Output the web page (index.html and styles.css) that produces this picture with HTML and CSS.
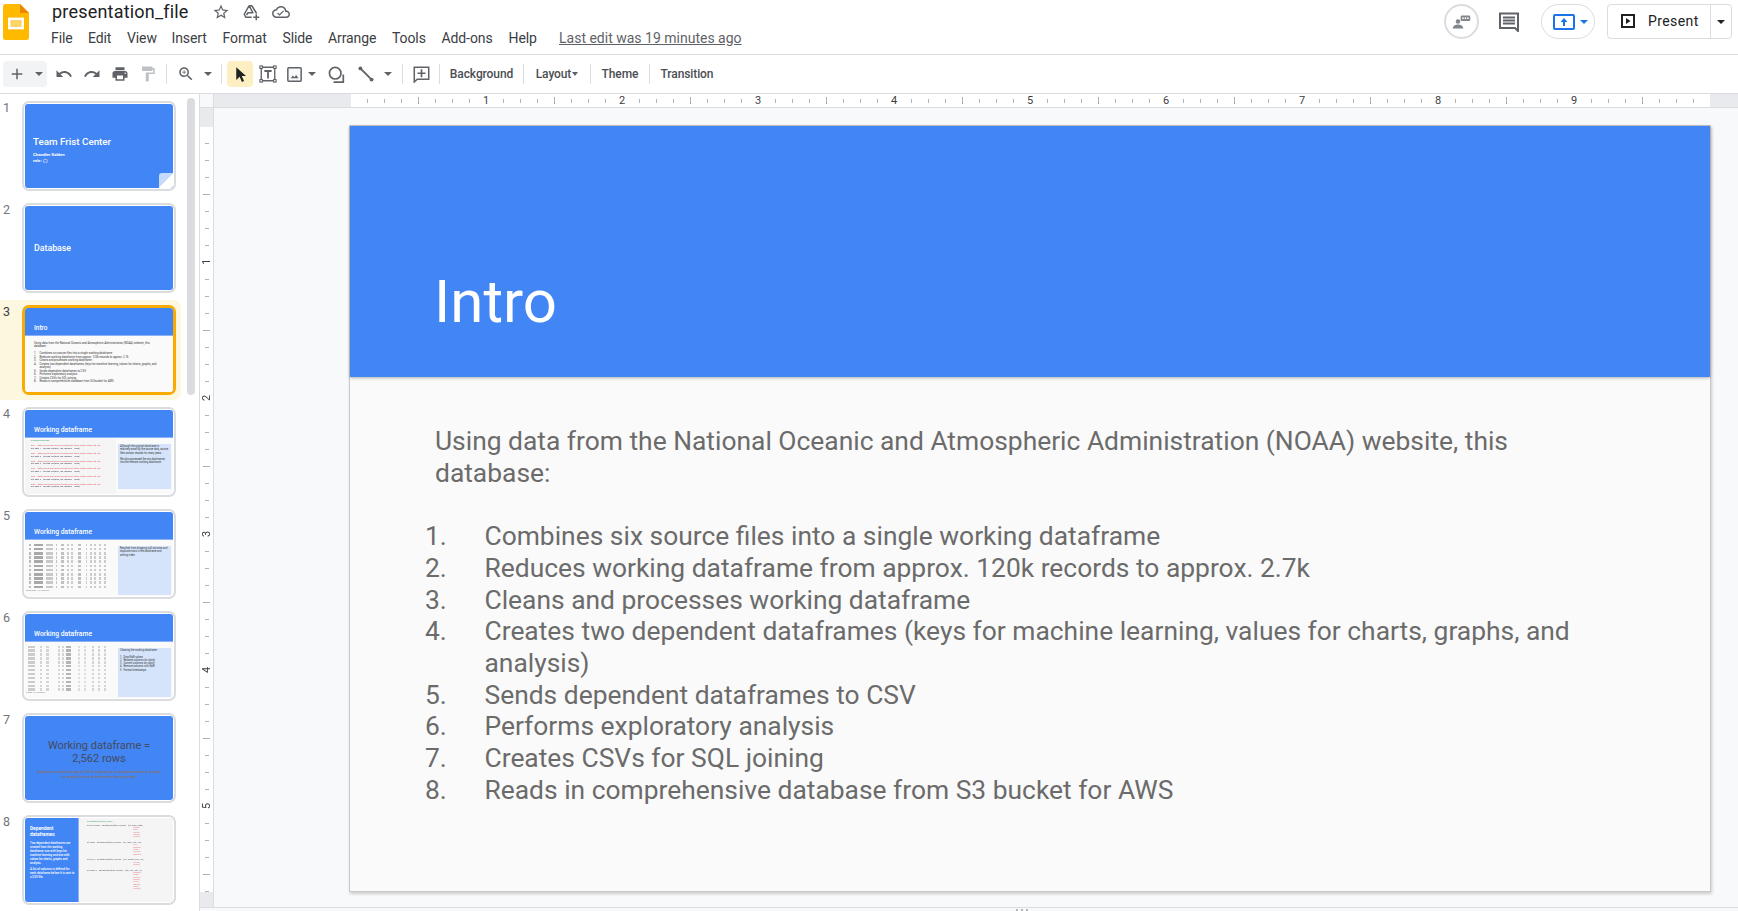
FILE: index.html
```html
<!DOCTYPE html>
<html lang="en">
<head>
<meta charset="utf-8">
<title>presentation_file - Google Slides</title>
<link rel="stylesheet" href="styles.css">
</head>
<body>
<header class="appbar">
  <svg class="logo" viewBox="0 0 26 36"><path fill="#ffba00" d="M2.500 0H17l9 9v24.500a2.500 2.500 0 0 1-2.500 2.500h-21A2.500 2.500 0 0 1 0 33.500V2.500A2.500 2.500 0 0 1 2.500 0z"/><path fill="#ea8600" d="M17 0l9 9h-9z"/><rect x="6.200" y="14.800" width="13.600" height="9.400" fill="#ffd466" stroke="#fff" stroke-width="2.400"/></svg>
  <div class="docinfo">
    <div class="titlerow">
      <span class="doctitle">presentation_file</span>
      <svg class="ico18 star" viewBox="0 0 24 24"><path fill="#5f6368" d="M22 9.240l-7.190-.62L12 2 9.190 8.630 2 9.240l5.460 4.730L5.820 21 12 17.270 18.180 21l-1.630-7.030L22 9.240zM12 15.400l-3.760 2.270 1-4.280-3.320-2.880 4.380-.38L12 6.100l1.710 4.040 4.380.38-3.320 2.880 1 4.280L12 15.400z"/></svg>
      <svg class="ico18 drive" viewBox="0 0 24 24"><path fill="none" stroke="#5f6368" stroke-width="2" stroke-linejoin="round" d="M9.500 3.500h3.500l6.500 10.500M9.500 3.500L3 15l2 4h8M9.500 3.500l5 9.500H8l-2 3"/><path fill="#5f6368" d="M18 15h2v3h3v2h-3v3h-2v-3h-3v-2h3z"/></svg>
      <svg class="ico18 cloud" viewBox="0 0 24 24"><path fill="#5f6368" d="M19.350 10.040C18.670 6.590 15.640 4 12 4 9.110 4 6.600 5.640 5.350 8.040 2.340 8.360 0 10.910 0 14c0 3.310 2.690 6 6 6h13c2.760 0 5-2.240 5-5 0-2.640-2.050-4.780-4.650-4.960zM19 18H6c-2.210 0-4-1.790-4-4s1.790-4 4-4h.71C7.370 7.690 9.480 6 12 6c3.040 0 5.500 2.460 5.500 5.500v.5H19c1.660 0 3 1.340 3 3s-1.340 3-3 3z"/><path fill="#5f6368" d="M10 14.800l-2.100-2.100-1.100 1.100 3.200 3.200 6-6-1.100-1.100z"/></svg>
    </div>
    <nav class="menubar">
      <span class="menu m-file">File</span><span class="menu m-edit">Edit</span><span class="menu m-view">View</span><span class="menu m-insert">Insert</span><span class="menu m-format">Format</span><span class="menu m-slide">Slide</span><span class="menu m-arrange">Arrange</span><span class="menu m-tools">Tools</span><span class="menu m-addons">Add-ons</span><span class="menu m-help">Help</span>
      <a class="lastedit">Last edit was 19 minutes ago</a>
    </nav>
  </div>
  <div class="appright">
    <div class="activity"><svg viewBox="0 0 24 24" class="ico24"><circle cx="8" cy="12" r="2.600" fill="#80868b"/><path fill="#80868b" d="M2 20c0-3 3.200-4.500 6-4.500s6 1.500 6 4.500z"/><rect x="11" y="5" width="11" height="6.500" rx="1.500" fill="#80868b"/><g fill="#fff"><circle cx="13.700" cy="8.200" r="1"/><circle cx="16.500" cy="8.200" r="1"/><circle cx="19.300" cy="8.200" r="1"/></g></svg></div>
    <svg class="comments" viewBox="0 0 20 20"><path fill="none" stroke="#5f6368" stroke-width="2" d="M1 1.500h18V19l-3-3H1z"/><path stroke="#5f6368" stroke-width="1.800" d="M4 5.500h12M4 8.500h12M4 11.500h12"/></svg>
    <div class="sharepill"><svg class="share-ico" viewBox="0 0 22 16"><rect x="1" y="1" width="20" height="14" rx="1" fill="none" stroke="#1a73e8" stroke-width="2"/><path fill="#1a73e8" d="M11 4l3.500 4H12v4h-2V8H7.500z"/></svg><span class="caret blue"></span></div>
    <div class="present">
      <div class="present-main"><svg class="present-ico" viewBox="0 0 14 14"><rect x="1" y="1" width="12" height="12" fill="none" stroke="#202124" stroke-width="2"/><path fill="#202124" d="M5 4l4.500 3L5 10z"/></svg><span>Present</span></div>
      <div class="present-drop"><span class="caret dark"></span></div>
    </div>
  </div>
</header>
<div class="toolbar">
  <div class="newgroup"><svg class="ico18" viewBox="0 0 24 24"><path fill="#5f6368" d="M19 13h-6v6h-2v-6H5v-2h6V5h2v6h6z"/></svg><span class="caret"></span></div>
  <button class="tb tb-first"><svg class="ico18" viewBox="0 0 24 24"><path fill="#5f6368" d="M12.500 8c-2.650 0-5.050.99-6.900 2.600L2 7v9h9l-3.620-3.620c1.390-1.160 3.160-1.880 5.120-1.880 3.540 0 6.550 2.310 7.600 5.500l2.370-.78C21.080 11.030 17.150 8 12.500 8z"/></svg></button>
  <button class="tb"><svg class="ico18" viewBox="0 0 24 24"><path fill="#5f6368" d="M18.400 10.600C16.550 8.990 14.150 8 11.500 8c-4.650 0-8.580 3.030-9.960 7.220L3.900 16c1.050-3.190 4.050-5.500 7.600-5.500 1.950 0 3.730.72 5.120 1.880L13 16h9V7l-3.600 3.600z"/></svg></button>
  <button class="tb"><svg class="ico18" viewBox="0 0 24 24"><path fill="#5f6368" d="M19 8H5c-1.660 0-3 1.340-3 3v6h4v4h12v-4h4v-6c0-1.660-1.340-3-3-3zm-3 11H8v-5h8v5zm3-7c-.55 0-1-.45-1-1s.45-1 1-1 1 .45 1 1-.45 1-1 1zm-1-9H6v4h12V3z"/></svg></button>
  <button class="tb"><svg class="ico18" viewBox="0 0 24 24"><path fill="#bdc1c6" d="M18 4V3c0-.55-.45-1-1-1H5c-.55 0-1 .45-1 1v4c0 .55.45 1 1 1h12c.55 0 1-.45 1-1V6h1v4H9v11c0 .55.45 1 1 1h2c.55 0 1-.45 1-1v-9h8V4h-3z"/></svg></button>
  <i class="sep s-a"></i>
  <button class="tb"><svg class="ico18" viewBox="0 0 24 24"><path fill="#5f6368" d="M15.500 14h-.79l-.28-.27C15.410 12.590 16 11.110 16 9.500 16 5.910 13.090 3 9.500 3S3 5.910 3 9.500 5.910 16 9.500 16c1.610 0 3.090-.59 4.230-1.570l.27.28v.79l5 4.990L20.490 19l-4.990-5zm-6 0C7.010 14 5 11.990 5 9.500S7.010 5 9.500 5 14 7.010 14 9.500 11.990 14 9.500 14z"/><path fill="#5f6368" d="M12 10h-2v2H9v-2H7V9h2V7h1v2h2z"/></svg></button>
  <button class="tb-caret"><span class="caret"></span></button>
  <i class="sep s-b"></i>
  <button class="tb tb-active"><svg class="ico18" viewBox="0 0 24 24"><path fill="#202124" d="M7 3v17l4.500-4.300 3.100 6.800 2.800-1.300-3.100-6.600H20z"/></svg></button>
  <button class="tb tb-text"><svg class="ico20" viewBox="0 0 20 20"><path fill="none" stroke="#5f6368" stroke-width="1.500" d="M2.500 2.500h15v15h-15z"/><g fill="#fff" stroke="#5f6368" stroke-width="1.200"><rect x="1" y="1" width="2.800" height="2.800"/><rect x="16.200" y="1" width="2.800" height="2.800"/><rect x="1" y="16.200" width="2.800" height="2.800"/><rect x="16.200" y="16.200" width="2.800" height="2.800"/></g><path fill="#5f6368" d="M6 5.500h8v2.200h-3v7.300H9V7.700H6z"/></svg></button>
  <button class="tb tb-img"><svg class="ico18" viewBox="0 0 18 18"><rect x="1" y="1" width="16" height="16" rx="1" fill="#f8f9fa" stroke="#5f6368" stroke-width="1.800"/><path fill="#5f6368" d="M4.500 13.500l2.500-3.200 1.800 2.100L11 9.500l2.800 4z"/></svg></button>
  <button class="tb-caret narrow"><span class="caret"></span></button>
  <button class="tb tb-shape"><svg class="ico20" viewBox="0 0 20 20"><circle cx="8.500" cy="8.500" r="6.800" fill="none" stroke="#5f6368" stroke-width="2"/><path fill="none" stroke="#5f6368" stroke-width="2" d="M18 10v9H6.500"/></svg></button>
  <button class="tb tb-line"><svg class="ico20" viewBox="0 0 20 20"><path stroke="#5f6368" stroke-width="2.400" d="M3 3l14 14"/><circle cx="3" cy="3" r="2.400" fill="#5f6368"/><circle cx="17" cy="17" r="2.400" fill="#5f6368"/></svg></button>
  <button class="tb-caret"><span class="caret"></span></button>
  <i class="sep s-c"></i>
  <button class="tb tb-cmt"><svg class="ico20" viewBox="0 0 20 20"><path fill="none" stroke="#5f6368" stroke-width="1.800" d="M1.500 1.500h17v14H5l-3.500 3.300z"/><path fill="#5f6368" d="M9 3.800h2V7.500h3.700v2H11v3.700H9V9.500H5.300v-2H9z"/></svg></button>
  <i class="sep s-d"></i>
  <button class="tb-label l-bg">Background</button>
  <i class="sep s-e"></i>
  <button class="tb-label l-layout">Layout<span class="caret small"></span></button>
  <i class="sep s-f"></i>
  <button class="tb-label l-theme">Theme</button>
  <i class="sep s-g"></i>
  <button class="tb-label l-trans">Transition</button>
</div>
<div class="workspace">
  <aside class="filmstrip">
    <div class="strip-list">
      <div class="row"><span class="num">1</span>
        <div class="thumb"><div class="t-in t-title">
          <p class="t1-head">Team Frist Center</p><p class="t1-sub">Chandler Kalden</p><p class="t1-sub">role: ◯</p><i class="curl"></i>
        </div></div></div>
      <div class="row"><span class="num">2</span>
        <div class="thumb"><div class="t-in t-title"><p class="t2-head">Database</p></div></div></div>
      <div class="row row-active"><span class="num">3</span>
        <div class="thumb thumb-active"><div class="t-in t-light">
          <div class="t-band"><p class="t-h">Intro</p></div>
          <div class="t3-body">
            <p>Using data from the National Oceanic and Atmospheric Administration (NOAA) website, this database:</p>
            <ol class="t3-list"><li>Combines six source files into a single working dataframe</li><li>Reduces working dataframe from approx. 120k records to approx. 2.7k</li><li>Cleans and processes working dataframe</li><li>Creates two dependent dataframes (keys for machine learning, values for charts, graphs, and analysis)</li><li>Sends dependent dataframes to CSV</li><li>Performs exploratory analysis</li><li>Creates CSVs for SQL joining</li><li>Reads in comprehensive database from S3 bucket for AWS</li></ol>
          </div>
        </div></div></div>
      <div class="row"><span class="num">4</span>
        <div class="thumb"><div class="t-in t-light">
          <div class="t-band"><p class="t-h wide">Working dataframe</p></div>
          <div class="t-split">
            <div class="codebox"><p class="c-green">## Read in raw data</p>
              <p>file1 = "https://www.ncei.noaa.gov/data/noaa-storm-events-details-ftp-csv"</p><p>file_data_1 = pd.read_csv(file1, low_memory = False)</p>
              <p>file2 = "https://www.ncei.noaa.gov/data/noaa-storm-events-details-ftp-csv"</p><p>file_data_2 = pd.read_csv(file2, low_memory = False)</p>
              <p>file3 = "https://www.ncei.noaa.gov/data/noaa-storm-events-details-ftp-csv"</p><p>file_data_3 = pd.read_csv(file3, low_memory = False)</p>
              <p>file4 = "https://www.ncei.noaa.gov/data/noaa-storm-events-details-ftp-csv"</p><p>file_data_4 = pd.read_csv(file4, low_memory = False)</p>
              <p>file5 = "https://www.ncei.noaa.gov/data/noaa-storm-events-details-ftp-csv"</p><p>file_data_5 = pd.read_csv(file5, low_memory = False)</p>
              <p>file6 = "https://www.ncei.noaa.gov/data/noaa-storm-events-details-ftp-csv"</p><p>file_data_6 = pd.read_csv(file6, low_memory = False)</p>
            </div>
            <div class="notebox"><p>Although the original dataframe is relatively small by the source data, source files contain records for many years.</p><br><p>We also processed the raw dataframes into the relevant working dataframe.</p></div>
          </div>
        </div></div></div>
      <div class="row"><span class="num">5</span>
        <div class="thumb"><div class="t-in t-light">
          <div class="t-band"><p class="t-h wide">Working dataframe</p></div>
          <div class="t-split">
            <div class="tablebox"><div class="rows"></div><p class="tablecap">2,562 rows × 51 columns</p></div>
            <div class="notebox boxtall"><p>Resulted from dropping null columns and duplicate rows in the dataframe and setting index.</p></div>
          </div>
        </div></div></div>
      <div class="row"><span class="num">6</span>
        <div class="thumb"><div class="t-in t-light">
          <div class="t-band"><p class="t-h wide">Working dataframe</p></div>
          <div class="t-split">
            <div class="tablebox"><div class="rows rows-b"></div><p class="tablecap">5 rows × 51 columns</p></div>
            <div class="notebox boxtall"><p>Cleaning the working dataframe:</p><br><p>1. &nbsp;Drop NaN values</p><p>2. &nbsp;Rename columns for clarity</p><p>3. &nbsp;Convert columns for clarity</p><p>4. &nbsp;Remove columns with NaN</p><p>5. &nbsp;Format timestamps</p></div>
          </div>
        </div></div></div>
      <div class="row"><span class="num">7</span>
        <div class="thumb"><div class="t-in t-title t7">
          <p class="t7-big">Working dataframe =<br>2,562 rows</p>
          <p class="t7-small">Dataframe is reduced to approx 20% its original size, an adequate number of records for analysis but not as the machine learning model</p>
        </div></div></div>
      <div class="row"><span class="num">8</span>
        <div class="thumb"><div class="t-in t8">
          <div class="t8-left"><p class="t8-head">Dependent dataframes</p><p class="t8-txt">Two dependent dataframes are created from the working dataframe: one with keys for machine learning and one with values for charts, graphs and analysis.</p><p class="t8-txt">A list of columns is defined for each dataframe before it is sent to a CSV file.</p></div>
          <div class="t8-right">
            <p class="c-green">## Dataframes of keys, values</p>
            <p>df_keys_simple = pd.DataFrame(files, columns = ["id", "type", "state",</p><p class="c-red ind">"month",</p><p class="c-red ind">"year",</p><p class="c-red ind">"county",</p><p class="c-red ind">"source",</p><p class="c-red ind">"begin"])</p><p class="gap"></p>
            <p>df_values = pd.DataFrame(files, columns = ["id", "type", "city", "lat",</p><p class="c-red ind">"lon",</p><p class="c-red ind">"damage",</p><p class="c-red ind">"crops",</p><p class="c-red ind">"injuries",</p><p class="c-red ind">"deaths"])</p><p class="gap"></p>
            <p>df_keys_b = pd.DataFrame(files, columns = ["id", "month", "end", "src",</p><p class="c-red ind">"source",</p><p class="c-red ind">"begin"])</p><p class="gap"></p>
            <p>df_values_b = pd.DataFrame(files, columns = ["lat", "lon", "city", "id",</p><p class="c-red ind">"damage",</p><p class="c-red ind">"crops",</p><p class="c-red ind">"injuries",</p><p class="c-red ind">"deaths",</p><p class="c-red ind">"direct",</p><p class="c-red ind">"indirect",</p><p class="c-red ind">"state",</p><p class="c-red ind">"county"])</p>
          </div>
        </div></div></div>
    </div>
    <div class="scrolltrack"><div class="scrollthumb"></div></div>
  </aside>
  <main class="editor">
    <div class="ruler-top">
      <div class="corner"></div>
      <div class="grey-lead"></div>
      <div class="h-track">
        <span class="inch"><b>1</b></span><span class="inch"><b>2</b></span><span class="inch"><b>3</b></span><span class="inch"><b>4</b></span><span class="inch"><b>5</b></span><span class="inch"><b>6</b></span><span class="inch"><b>7</b></span><span class="inch"><b>8</b></span><span class="inch"><b>9</b></span>
      </div>
      <div class="grey-tail"></div>
    </div>
    <div class="canvas-row">
      <div class="ruler-left">
        <div class="grey-top"></div>
        <div class="v-track">
          <span class="vinch"><b>1</b></span><span class="vinch"><b>2</b></span><span class="vinch"><b>3</b></span><span class="vinch"><b>4</b></span><span class="vinch"><b>5</b></span>
        </div>
        <div class="grey-bot"></div>
      </div>
      <div class="canvas">
        <section class="slide">
          <div class="slide-head"><h1>Intro</h1></div>
          <div class="slide-body">
            <p class="lead">Using data from the National Oceanic and Atmospheric Administration (NOAA) website, this database:</p>
            <ol class="points">
              <li>Combines six source files into a single working dataframe</li>
              <li>Reduces working dataframe from approx. 120k records to approx. 2.7k</li>
              <li>Cleans and processes working dataframe</li>
              <li>Creates two dependent dataframes (keys for machine learning, values for charts, graphs, and analysis)</li>
              <li>Sends dependent dataframes to CSV</li>
              <li>Performs exploratory analysis</li>
              <li>Creates CSVs for SQL joining</li>
              <li>Reads in comprehensive database from S3 bucket for AWS</li>
            </ol>
          </div>
        </section>
      </div>
    </div>
    <div class="notes-handle"><i></i><i></i><i></i></div>
  </main>
</div>
</body>
</html>
```
FILE: styles.css
```css
* { box-sizing: border-box; }
html, body { margin: 0; height: 100%; }
body { width: 1738px; height: 911px; overflow: hidden; background: #fff; font-family: Roboto, "Liberation Sans", sans-serif; color: #3c4043; }
p, h1, ol { margin: 0; padding: 0; }
button { border: 0; background: none; padding: 0; margin: 0; font: inherit; color: inherit; display: flex; align-items: center; justify-content: center; }
svg { display: block; flex: none; }

/* app bar */
.appbar { height: 55px; border-bottom: 1px solid #dadce0; display: flex; position: relative; }
.logo { width: 26px; height: 36px; margin: 4px 0 0 3px; }
.docinfo { margin-left: 23px; }
.titlerow { display: flex; align-items: center; height: 24px; }
.doctitle { font-size: 18px; letter-spacing: .2px; color: #202124; width: 160px; line-height: 24px; }
.ico18 { width: 18px; height: 18px; }
.ico20 { width: 20px; height: 20px; }
.ico24 { width: 24px; height: 24px; }
.drive { margin-left: 12px; }
.cloud { margin-left: 12px; }
.menubar { display: flex; height: 26px; align-items: center; font-size: 14px; color: #3c4043; margin: 1px 0 0 -1px; }
.menu { display: block; letter-spacing: -.1px; }
.m-file { width: 37px; } .m-edit { width: 39px; } .m-view { width: 44.500px; } .m-insert { width: 51px; } .m-format { width: 60px; } .m-slide { width: 45.500px; } .m-arrange { width: 64px; } .m-tools { width: 49.500px; } .m-addons { width: 67px; } .m-help { width: 50.500px; }
.lastedit { color: #5f6368; text-decoration: underline; font-size: 14px; }
.appright { margin-left: auto; display: flex; align-items: flex-start; padding-top: 4px; padding-right: 6px; }
.activity { width: 35px; height: 35px; border: 2px solid #dadce0; border-radius: 50%; display: flex; align-items: center; justify-content: center; }
.activity .ico24 { width: 21px; height: 21px; }
.comments { width: 20px; height: 20px; margin: 8px 0 0 20px; }
.sharepill { width: 54px; height: 35px; margin-left: 22px; border: 1px solid #dadce0; border-radius: 18px; display: flex; align-items: center; padding-left: 11px; gap: 5px; }
.share-ico { width: 22px; height: 16px; }
.present { margin-left: 12px; width: 125px; height: 35px; border: 1px solid #dadce0; border-radius: 4px; display: flex; }
.present-main { width: 103px; border-right: 1px solid #dadce0; display: flex; align-items: center; padding: 0 0 1px 13px; gap: 13px; font-size: 14px; color: #202124; letter-spacing: .4px; }
.present-ico { width: 14px; height: 14px; }
.present-drop { flex: 1; display: flex; align-items: center; justify-content: center; }
.caret { display: block; width: 0; height: 0; border-left: 4px solid transparent; border-right: 4px solid transparent; border-top: 4px solid #5f6368; }
.caret.blue { border-top-color: #1a73e8; }
.caret.dark { border-top-color: #202124; }
.caret.small { display: inline-block; border-left-width: 3.500px; border-right-width: 3.500px; margin-left: 1px; vertical-align: 2px; }

/* toolbar */
.toolbar { height: 38px; display: flex; align-items: center; padding-left: 3px; }
.newgroup { width: 44px; height: 26px; background: #f1f3f4; border-radius: 4px; display: flex; align-items: center; padding-left: 5px; gap: 9px; }
.tb { width: 28px; height: 26px; }
.tb-first { margin-left: 3px; }
.tb-caret { width: 16px; height: 26px; }
.tb-caret.narrow { width: 12px; }
.tb-active { background: #feefc3; border-radius: 4px; width: 26px; }
.tb-text { margin-left: 1px; }
.tb-text svg { width: 18px; height: 18px; }
.tb-img { width: 24px; }
.tb-img svg { width: 15px; height: 15px; }
.tb-shape { margin-left: 4px; }
.tb-shape svg { width: 17px; height: 17px; }
.tb-line { margin-left: 2px; }
.tb-line svg { width: 16px; height: 16px; }
.tb-cmt svg { width: 17px; height: 17px; }
.sep { display: block; width: 1px; height: 20px; background: #dadce0; }
.s-a { margin: 0 5px 0 4px; }
.s-b { margin: 0 5px; }
.s-c { margin: 0 4px 0 6px; }
.s-d, .s-e, .s-f, .s-g { margin: 0 4px; }
.tb-label { font-size: 12px; font-weight: 500; letter-spacing: -.1px; color: #4a4e52; height: 26px; white-space: nowrap; }
.l-bg { width: 75px; }
.l-layout { width: 58px; }
.l-theme { width: 50px; }
.l-trans { width: 66px; }

/* workspace */
.workspace { height: 818px; border-top: 1px solid #dadce0; display: flex; overflow: hidden; }
.filmstrip { width: 200px; border-right: 1px solid #dadce0; display: flex; position: relative; flex: none; }
.strip-list { width: 181px; padding-top: 2px; display: flex; flex-direction: column; gap: 2px; }
.row { height: 100px; flex: none; display: flex; padding: 5px 0 0 3px; border-radius: 0 8px 8px 0; }
.row-active { background: #fef7e0; }
.num { width: 19px; font-size: 12.500px; color: #70757a; line-height: 14px; }
.row-active .num { color: #3c4043; }
.thumb { width: 154px; height: 90px; border: 2px solid #dadce0; border-radius: 7px; padding: 1px; background: #fff; }
.thumb-active { border: 3px solid #f9ab00; padding: 0; }
.t-in { width: 100%; height: 100%; border-radius: 3px; overflow: hidden; position: relative; }
.t-title { background: #4285f4; color: #fff; }
.t1-head { font-size: 9.800px; font-weight: 500; padding: 31.500px 0 5px 8px; line-height: 11px; }
.t1-sub { font-size: 4.300px; font-weight: 700; padding-left: 8px; line-height: 6.300px; }
.curl { position: absolute; right: 0; bottom: 0; width: 14px; height: 15px; background: linear-gradient(135deg, #c6dafc 0 50%, #fff 50%); border-top-left-radius: 3px; }
.t2-head { font-size: 8.800px; font-weight: 500; padding: 37px 0 0 9px; line-height: 11px; }
.t-light { background: #fafafa; color: #595959; }
.t-band { height: 27.500px; background: #4285f4; border-bottom: 1px solid #8ab0f5; color: #fff; padding: 15.500px 0 0 9px; }
.t-h { font-size: 6.500px; line-height: 8px; font-weight: 500; }
.t-h.wide { font-size: 6.800px; }
.t3-body { padding: 6px 13px 0 9px; font-size: 2.850px; line-height: 3.500px; color: #333; }
.t3-list { margin-top: 3.500px; list-style: none; counter-reset: t; padding-left: 5.500px; }
.t3-list li { counter-increment: t; position: relative; }
.t3-list li::before { content: counter(t) "."; position: absolute; left: -5.500px; }
.t-split { display: flex; height: 57px; }
.codebox { width: 91px; margin-top: 1px; padding: 1px 0 0 6px; background: #f5f5f5; font-size: 2.100px; line-height: 2.700px; font-weight: 500; white-space: nowrap; overflow: hidden; color: #666; filter: blur(.2px); }
.codebox p:nth-child(2n) { color: #e06c75; }
.codebox p:nth-child(2n+1) { color: #556; margin-bottom: 2.300px; }
.codebox p.c-green { color: #3fa768; margin-bottom: 3px; }
.c-green { color: #3fa768; }
.c-red { color: #e0787c; }
.notebox { width: 53px; height: 45px; margin: 6px 0 0 2px; background: #d5e4fb; padding: 1.500px 2px; font-size: 2.600px; line-height: 3.300px; color: #333; }
.boxtall { height: 49px; margin-top: 6px; }
.tablebox { width: 91px; padding: 2px 0 0 1px; }
.rows { height: 47px; filter: blur(.3px); background:
  repeating-linear-gradient(#fafafa 0 1.600px, transparent 1.600px 4.200px),
  linear-gradient(90deg, #fafafa 0 3px, #bbb 3px 5px, #fafafa 5px 8px, #a8a8a8 8px 17px, #fafafa 17px 20px, #c8c8c8 20px 27px, #fafafa 27px 30px, #c4c4c4 30px 31.500px, #fafafa 31.500px 35px, #c0c0c0 35px 38px, #fafafa 38px 41px, #ccc 41px 43px, #fafafa 43px 45px, #ccc 45px 47px, #fafafa 47px 52px, #c0c0c0 52px 55px, #fafafa 55px 60px, #ccc 60px 61.500px, #fafafa 61.500px 64px, #ccc 64px 66px, #fafafa 66px 68px, #ccc 68px 70px, #fafafa 70px 73px, #ccc 73px 75px, #fafafa 75px 78px, #ccc 78px 80px, #fafafa 80px); }
.rows-b { background:
  repeating-linear-gradient(#fafafa 0 1.500px, transparent 1.500px 3.900px),
  linear-gradient(90deg, #fafafa 0 2px, #ccc 2px 9px, #fafafa 9px 14px, #d4d4d4 14px 16px, #fafafa 16px 20px, #d4d4d4 20px 23px, #fafafa 23px 32px, #d4d4d4 32px 34px, #fafafa 34px 36px, #d4d4d4 36px 38px, #fafafa 38px 40px, #b4b4b4 40px 45px, #fafafa 45px 52px, #ddd 52px 54px, #fafafa 54px 58px, #ddd 58px 60px, #fafafa 60px 66px, #d4d4d4 66px 68px, #fafafa 68px 72px, #d4d4d4 72px 74px, #fafafa 74px 78px, #d4d4d4 78px 80px, #fafafa 80px); }
.tablecap { font-size: 2.100px; color: #777; line-height: 4px; }
.t7 { text-align: center; }
.t7-big { font-size: 11px; line-height: 13px; color: #434b5c; padding-top: 23px; }
.t7-small { font-size: 3.300px; line-height: 5px; color: #a0692f; padding: 4.500px 10px 0; }
.t8 { display: flex; background: #f5f5f5; }
.t8-left { width: 54px; background: #4285f4; color: #fff; padding: 8px 3px 0 5px; border-right: 1px solid #8ab0f5; }
.t8-head { font-size: 4.800px; line-height: 6px; font-weight: 700; margin-bottom: 4px; }
.t8-txt { font-size: 2.900px; line-height: 3.900px; font-weight: 500; margin-bottom: 3px; }
.t8-right { flex: 1; padding: 2px 0 0 8px; font-size: 1.900px; line-height: 2.300px; overflow: hidden; white-space: nowrap; color: #556; filter: blur(.2px); }
.t8-right p.c-green { margin-bottom: 1.500px; }
.ind { padding-left: 46px; }
.gap { height: 3.500px; }
.scrolltrack { position: absolute; left: 187px; top: 4px; width: 8px; height: 297px; }
.scrollthumb { height: 100%; background: #dadce0; border-radius: 4px; }

/* editor */
.editor { flex: 1; display: flex; flex-direction: column; background: #f8f9fa; min-width: 0; position: relative; }
.ruler-top { height: 14px; display: flex; border-bottom: 1px solid #dadce0; background: #fff; flex: none; }
.corner { width: 14px; border-right: 1px solid #dadce0; background: #f8f9fa; }
.grey-lead { width: 137px; background: #e8eaed; }
.grey-tail { flex: 1; background: #e8eaed; }
.h-track { width: 1359px; display: flex; flex: none; background:
  repeating-linear-gradient(90deg, transparent 0 16px, #b4b4b4 16px 17px) 0 5px / 100% 4px no-repeat,
  repeating-linear-gradient(90deg, transparent 0 67px, #a8a8a8 67px 68px) 0 3px / 100% 7px no-repeat,
  #fff; }
.inch { width: 136px; flex: none; display: flex; justify-content: flex-end; font-size: 11px; line-height: 13px; color: #3c4043; }
.inch b { font-weight: 400; width: 10px; text-align: center; background: #fff; position: relative; left: 4px; }
.canvas-row { height: 800px; flex: none; display: flex; min-height: 0; border-bottom: 1px solid #dadce0; }
.ruler-left { width: 14px; flex: none; border-right: 1px solid #dadce0; background: #fff; display: flex; flex-direction: column; }
.grey-top { height: 19px; background: #e8eaed; flex: none; }
.v-track { height: 765px; flex: none; background:
  repeating-linear-gradient(transparent 0 16px, #b4b4b4 16px 17px) 5px 0 / 4px 100% no-repeat,
  repeating-linear-gradient(transparent 0 67px, #a8a8a8 67px 68px) 3px 0 / 7px 100% no-repeat,
  #fff; }
.vinch { display: flex; height: 136px; align-items: flex-end; justify-content: center; font-size: 11px; color: #3c4043; }
.vinch b { font-weight: 400; writing-mode: vertical-rl; transform: rotate(180deg); height: 10px; line-height: 13px; width: 13px; text-align: center; background: #fff; position: relative; top: 4px; }
.grey-bot { flex: 1; background: #e8eaed; }
.canvas { flex: 1; padding: 17px 0 0 135px; }
.slide { width: 1362px; height: 767px; background: #fafafa; border: 1px solid #c8c8c8; box-shadow: 1px 2px 3px rgba(0,0,0,.18); display: flex; flex-direction: column; }
.slide-head { height: 251px; background: #4285f4; box-shadow: 0 1px 3px rgba(0,0,0,.3); display: flex; align-items: flex-end; padding: 0 0 39px 84px; flex: none; }
h1 { font-size: 60px; line-height: 72px; font-weight: 400; color: #fff; }
.slide-body { padding: 49px 100px 0 85px; font-size: 26.400px; line-height: 31.700px; color: #6b6b6b; }
.points { margin-top: 31.700px; list-style: none; counter-reset: n; margin-left: -10px; }
.points li { counter-increment: n; padding-left: 59.500px; position: relative; }
.points li::before { content: counter(n) "."; position: absolute; left: 0; }
.notes-handle { position: absolute; left: 816px; bottom: 0; display: flex; gap: 3px; }
.notes-handle i { width: 2px; height: 2px; background: #9aa0a6; border-radius: 50%; }
```
